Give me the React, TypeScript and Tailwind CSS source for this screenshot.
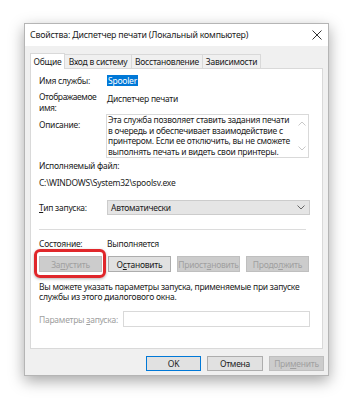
import React from "react";

const font = { fontFamily: '"Noto Sans", "Open Sans", sans-serif' };

const Chevron = ({ up = false, className = "" }: { up?: boolean; className?: string }) => (
  <svg width="8" height="5" viewBox="0 0 8 5" className={className}>
    <path
      d={up ? "M0.5 4.5 L4 1 L7.5 4.5" : "M0.5 0.5 L4 4 L7.5 0.5"}
      fill="none"
      stroke="currentColor"
      strokeWidth="1"
    />
  </svg>
);

const tabs = ["Общие", "Вход в систему", "Восстановление", "Зависимости"];
const tabWidths = ["w-[35px]", "w-[68px]", "w-[72px]", "w-[59px]"];

const App = () => {
  return (
    <div
      className="h-[400px] w-[354px] bg-white pl-[24px] pt-[23px] text-[8.5px] leading-[11px] tracking-[-0.25px] text-[#1b1b1b]"
      style={font}
    >
      <div className="flex h-[353px] w-[305px] flex-col border border-[#b5b5b5] bg-[#f0f0f0] shadow-[0_5px_14px_rgba(0,0,0,0.35)]">
        {/* title bar */}
        <div className="flex h-[22px] items-center justify-between bg-white pl-[5px] pr-[6px]">
          <span className="text-[8.8px] tracking-[-0.2px] text-[#222]">Свойства: Диспетчер печати (Локальный компьютер)</span>
          <svg width="10" height="10" viewBox="0 0 10 10" className="text-[#333]">
            <path d="M0.5 0.5 L9.5 9.5 M9.5 0.5 L0.5 9.5" stroke="currentColor" strokeWidth="1" />
          </svg>
        </div>

        {/* tabs */}
        <div className="mt-[8px] flex h-[14px] items-end pl-[5px]">
          {tabs.map((t, i) => (
            <div
              key={t}
              className={`${tabWidths[i]} flex items-center justify-center border border-b-0 border-[#d9d9d9] ${
                i === 0 ? "relative z-10 -mb-px h-[16px] bg-white" : "-ml-px h-full bg-[#f0f0f0]"
              }`}
            >
              <span className="whitespace-nowrap">{t}</span>
            </div>
          ))}
        </div>

        {/* panel */}
        <div className="mx-[5px] flex h-[281px] flex-col border border-[#d9d9d9] bg-white pl-[8px] pr-[12px]">
          <div className="mt-[5px] flex h-[12px] items-center">
            <span className="w-[68px] shrink-0">Имя службы:</span>
            <span className="bg-[#0078d7] px-px text-white">Spooler</span>
          </div>

          <div className="mt-[5px] flex">
            <span className="w-[68px] shrink-0 tracking-[-0.4px]">
              Отображаемое
              <br />
              имя:
            </span>
            <span className="pt-[2px]">Диспетчер печати</span>
          </div>

          <div className="mt-px flex">
            <span className="w-[67px] shrink-0 pt-[5px]">Описание:</span>
            <div className="flex h-[44px] w-[203px] border border-[#d9d9d9] bg-white">
              <div className="flex-1 pl-px leading-[10.5px]">
                <div className="whitespace-nowrap">Эта служба позволяет ставить задания печати</div>
                <div className="whitespace-nowrap">в очередь и обеспечивает взаимодействие с</div>
                <div className="whitespace-nowrap">принтером. Если ее отключить, вы не сможете</div>
                <div className="whitespace-nowrap">выполнять печать и видеть свои принтеры.</div>
              </div>
              <div className="flex w-[12px] flex-col items-center justify-between py-[6px] text-[#c8c8c8]">
                <Chevron up />
                <Chevron />
              </div>
            </div>
          </div>

          <div className="mt-[2px]">Исполняемый файл:</div>
          <div className="mt-[6px]">C:\WINDOWS\System32\spoolsv.exe</div>

          <div className="mt-[12px] flex h-[15px] items-center">
            <span className="w-[68px] shrink-0">
              <span className="underline">Т</span>ип запуска:
            </span>
            <div className="flex h-full w-[203px] items-center justify-between border border-[#cccccc] bg-[#e5e5e5] pl-[3px] pr-[4px]">
              <span>Автоматически</span>
              <Chevron className="text-[#666]" />
            </div>
          </div>

          <div className="mt-[14px] w-[267px] border-t border-[#dcdcdc]" />

          <div className="mt-[8px] flex">
            <span className="w-[68px] shrink-0">Состояние:</span>
            <span>Выполняется</span>
          </div>

          <div className="relative mt-[7px] flex gap-[6px]">
            <button className="h-[16px] w-[63px] border border-[#bfbfbf] bg-[#cccccc] text-[#a0a0a0]">
              За<span className="underline">п</span>устить
            </button>
            <button className="h-[16px] w-[63px] border border-[#adadad] bg-[#e1e1e1]">
              О<span className="underline">с</span>тановить
            </button>
            <button className="h-[16px] w-[63px] border border-[#bfbfbf] bg-[#cccccc] text-[#a0a0a0]">
              Приост<span className="underline">а</span>новить
            </button>
            <button className="h-[16px] w-[63px] border border-[#bfbfbf] bg-[#cccccc] text-[#a0a0a0]">
              Продо<span className="underline">л</span>жить
            </button>
            <div className="absolute -left-[5px] -top-[7px] h-[29px] w-[72px] rounded-[6px] border-[3px] border-[#e0272b] shadow-[0_1px_3px_rgba(0,0,0,0.3)]" />
          </div>

          <div className="mt-[10px] whitespace-nowrap leading-[10px]">
            Вы можете указать параметры запуска, применяемые при запуске
            <br />
            службы из этого диалогового окна.
          </div>

          <div className="mt-[9px] flex h-[16px] items-center">
            <span className="w-[84px] shrink-0 whitespace-nowrap text-[#a0a0a0]">
              Параметры <span className="underline">з</span>апуска:
            </span>
            <div className="h-full w-[187px] border border-[#d9d9d9] bg-white" />
          </div>
        </div>

        {/* bottom buttons */}
        <div className="mt-[7px] flex justify-end gap-[6px] pr-[4px]">
          <button className="h-[15px] w-[55px] border border-[#0078d7] bg-[#e1e1e1]">OK</button>
          <button className="h-[15px] w-[56px] border border-[#adadad] bg-[#e1e1e1]">Отмена</button>
          <button className="h-[15px] w-[55px] border border-[#bfbfbf] bg-[#cccccc] text-[#a0a0a0]">
            При<span className="underline">м</span>енить
          </button>
        </div>
      </div>
    </div>
  );
};

export default App;
